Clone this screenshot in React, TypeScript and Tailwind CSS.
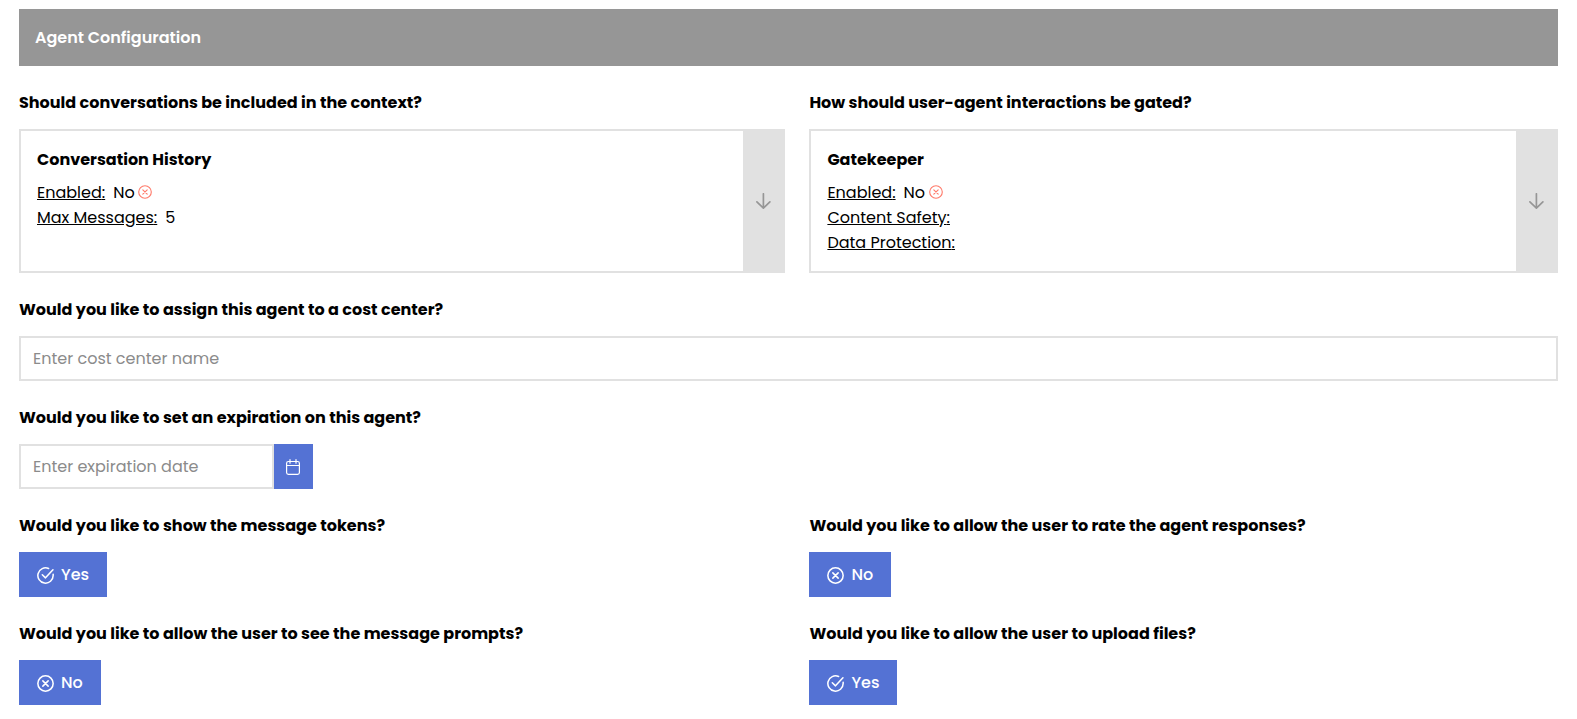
import type { ReactNode } from 'react';

function CheckCircle() {
  return (
    <svg className="mt-px size-[17px]" viewBox="0 0 16 16" fill="none" stroke="currentColor" strokeWidth="1.45" strokeLinecap="round" strokeLinejoin="round">
      <path d="M15.2 6.9V8a7.2 7.2 0 1 1-4.3-6.58" />
      <path d="M5 7.3 8 10.2 15 2.6" />
    </svg>
  );
}

function TimesCircle({ className, stroke = 1.45 }: { className: string; stroke?: number }) {
  return (
    <svg className={className} viewBox="0 0 16 16" fill="none" stroke="currentColor" strokeWidth={stroke} strokeLinecap="round">
      <circle cx="8" cy="8" r="7.2" />
      <path d="m5.5 5.5 5 5m0-5-5 5" />
    </svg>
  );
}

function ArrowDown() {
  return (
    <svg className="size-4" viewBox="0 0 16 16" fill="none" stroke="currentColor" strokeWidth="1.7" strokeLinecap="round" strokeLinejoin="round">
      <path d="M8.4 .8v14.2M1.9 8.8l6.5 6.3 6.5-6.3" />
    </svg>
  );
}

function Calendar() {
  return (
    <svg className="size-4" viewBox="0 0 16 16" fill="none" stroke="currentColor" strokeWidth="1.2" strokeLinecap="round" strokeLinejoin="round">
      <rect x="1.6" y="2.5" width="12.8" height="12.8" rx="1.8" />
      <path d="M1.6 6.5h12.8M5 .6v3.6M11 .6v3.6" />
    </svg>
  );
}

function Field({ label, children }: { label: string; children: ReactNode }) {
  return (
    <div>
      <div className="mb-[13px] h-[26px] font-bold leading-[26px] whitespace-nowrap">{label}</div>
      {children}
    </div>
  );
}

function Card({ title, children }: { title: string; children: ReactNode }) {
  return (
    <div className="flex h-36 border-2 border-[#e1e1e1]">
      <div className="flex-1 p-4">
        <div className="mb-[7px] h-[26px] font-bold leading-[26px]">{title}</div>
        {children}
      </div>
      <div className="flex w-10 items-center justify-center bg-[#e1e1e1] text-[#969696]">
        <ArrowDown />
      </div>
    </div>
  );
}

function Property({ name, value, off }: { name: string; value?: string; off?: boolean }) {
  return (
    <div className="flex h-[25px] items-center">
      <span className="underline">{name}:</span>
      {value && <span className="ml-2">{value}</span>}
      {off && <TimesCircle className="mb-px ml-[3.8px] size-[14px] text-[#ff7b6b]" stroke={1.3} />}
    </div>
  );
}

function Toggle({ on }: { on: boolean }) {
  return (
    <button className={`flex h-[45px] items-center bg-[#5472d4] pl-[17.7px] font-medium text-white ${on ? 'w-[88px]' : 'w-[82px]'}`}>
      {on ? <CheckCircle /> : <TimesCircle className="mt-px size-[17px]" />}
      <span className="ml-[7.3px]">{on ? 'Yes' : 'No'}</span>
    </button>
  );
}

export default function App() {
  return (
    <main className="flex h-[719px] flex-col gap-6 bg-white pt-[9px] pr-[19px] pl-[19px] font-['Poppins','Inter',sans-serif] text-base text-black">
      <header className="flex h-[57px] items-center bg-[#969696] px-4 font-semibold text-white">Agent Configuration</header>
      <div className="grid grid-cols-[766.4px_748.6px] gap-6">
        <Field label="Should conversations be included in the context?">
          <Card title="Conversation History">
            <Property name="Enabled" value="No" off />
            <Property name="Max Messages" value="5" />
          </Card>
        </Field>
        <Field label="How should user-agent interactions be gated?">
          <Card title="Gatekeeper">
            <Property name="Enabled" value="No" off />
            <Property name="Content Safety" />
            <Property name="Data Protection" />
          </Card>
        </Field>
      </div>
      <Field label="Would you like to assign this agent to a cost center?">
        <input className="block h-[45px] w-full border-2 border-[#e1e1e1] px-3 placeholder:text-[#8b8b8b]" placeholder="Enter cost center name" />
      </Field>
      <Field label="Would you like to set an expiration on this agent?">
        <div className="flex">
          <input className="block h-[45px] w-[255px] border-2 border-[#e1e1e1] px-3 placeholder:text-[#8b8b8b]" placeholder="Enter expiration date" />
          <button className="flex h-[45px] w-[39px] items-center bg-[#5472d4] pl-[11px] text-white">
            <Calendar />
          </button>
        </div>
      </Field>
      <div className="grid grid-cols-[766.4px_748.6px] gap-6">
        <Field label="Would you like to show the message tokens?">
          <Toggle on />
        </Field>
        <Field label="Would you like to allow the user to rate the agent responses?">
          <Toggle on={false} />
        </Field>
        <Field label="Would you like to allow the user to see the message prompts?">
          <Toggle on={false} />
        </Field>
        <Field label="Would you like to allow the user to upload files?">
          <Toggle on />
        </Field>
      </div>
    </main>
  );
}
